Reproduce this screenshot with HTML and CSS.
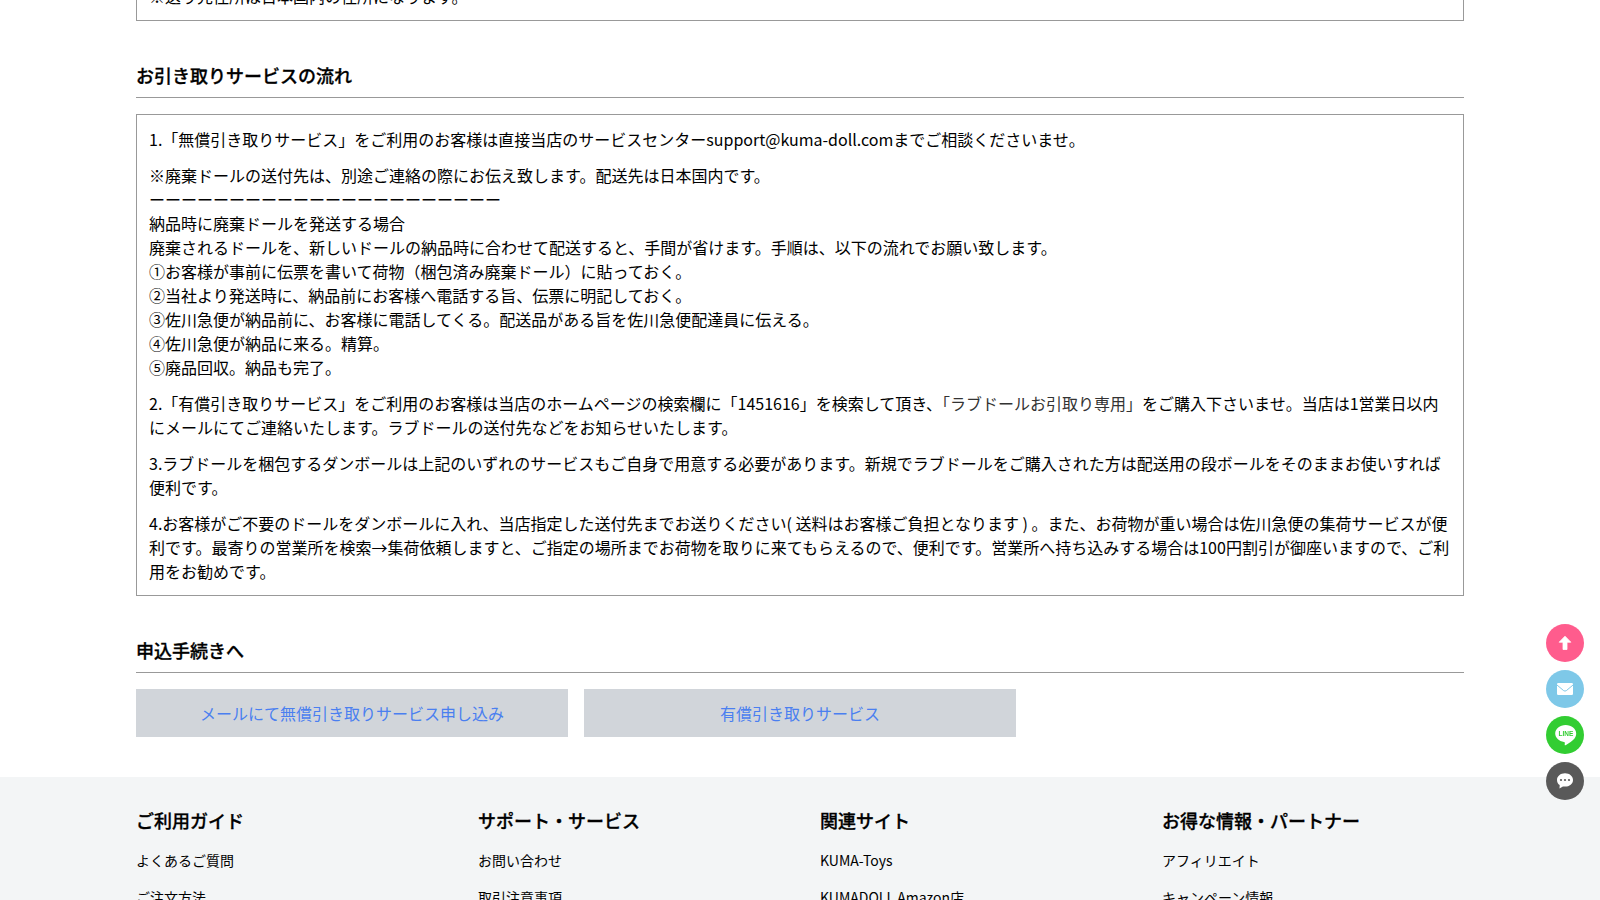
FILE: index.html
```
<!DOCTYPE html>
<html lang="ja">

<head>
    <meta charset="UTF-8">
    <meta name="viewport" content="width=device-width, initial-scale=1.0">
    <title>お引き取りサービス</title>
    <link rel="stylesheet" href="styles.css">
</head>

<body>
    <main class="container">
        <div class="box box-top">
            <p>※送り先住所は日本国内の住所になります。</p>
        </div>

        <h2 class="title">お引き取りサービスの流れ</h2>
        <div class="box">
            <p>1.「無償引き取りサービス」をご利用のお客様は直接当店のサービスセンターsupport@kuma-doll.comまでご相談くださいませ。</p>
            <p>※廃棄ドールの送付先は、別途ご連絡の際にお伝え致します。配送先は日本国内です。<br>
                ーーーーーーーーーーーーーーーーーーーーーー<br>
                納品時に廃棄ドールを発送する場合<br>
                廃棄されるドールを、新しいドールの納品時に合わせて配送すると、手間が省けます。手順は、以下の流れでお願い致します。<br>
                ①お客様が事前に伝票を書いて荷物（梱包済み廃棄ドール）に貼っておく。<br>
                ②当社より発送時に、納品前にお客様へ電話する旨、伝票に明記しておく。<br>
                ③佐川急便が納品前に、お客様に電話してくる。配送品がある旨を佐川急便配達員に伝える。<br>
                ④佐川急便が納品に来る。精算。<br>
                ⑤廃品回収。納品も完了。</p>
            <p>2.「有償引き取りサービス」をご利用のお客様は当店のホームページの検索欄に「1451616」を検索して頂き、<a href="#">「ラブドールお引取り専用」</a>をご購入下さいませ。当店は1営業日以内にメールにてご連絡いたします。ラブドールの送付先などをお知らせいたします。</p>
            <p>3.ラブドールを梱包するダンボールは上記のいずれのサービスもご自身で用意する必要があります。新規でラブドールをご購入された方は配送用の段ボールをそのままお使いすれば便利です。</p>
            <p>4.お客様がご不要のドールをダンボールに入れ、当店指定した送付先までお送りください( 送料はお客様ご負担となります ) 。また、お荷物が重い場合は佐川急便の集荷サービスが便利です。最寄りの営業所を検索→集荷依頼しますと、ご指定の場所までお荷物を取りに来てもらえるので、便利です。営業所へ持ち込みする場合は100円割引が御座いますので、ご利用をお勧めです。</p>
        </div>

        <h2 class="title">申込手続きへ</h2>
        <div class="apply">
            <a class="apply-btn" href="#">メールにて無償引き取りサービス申し込み</a>
            <a class="apply-btn" href="#">有償引き取りサービス</a>
        </div>
    </main>

    <footer class="footer">
        <div class="footer-inner">
            <div class="footer-col">
                <h3>ご利用ガイド</h3>
                <a href="#">よくあるご質問</a>
                <a href="#">ご注文方法</a>
            </div>
            <div class="footer-col">
                <h3>サポート・サービス</h3>
                <a href="#">お問い合わせ</a>
                <a href="#">取引注意事項</a>
            </div>
            <div class="footer-col">
                <h3>関連サイト</h3>
                <a href="#">KUMA-Toys</a>
                <a href="#">KUMADOLL Amazon店</a>
            </div>
            <div class="footer-col">
                <h3>お得な情報・パートナー</h3>
                <a href="#">アフィリエイト</a>
                <a href="#">キャンペーン情報</a>
            </div>
        </div>
    </footer>

    <!-- Floating buttons -->
    <div class="side">
        <a class="side-btn top" href="#">
            <svg viewBox="0 0 38 38"><path d="M19 12.2L24.8 18.2H21V25.500H17V18.2H13.200Z" fill="#fff" stroke="#fff" stroke-width=".8" stroke-linejoin="round"/></svg>
        </a>
        <a class="side-btn mail" href="#">
            <svg viewBox="0 0 38 38"><rect x="11" y="13" width="16" height="12" rx="1.2" fill="#fff"/><path d="M11 15L17.600 20.600Q19 21.600 20.400 20.600L27 15" fill="none" stroke="#7ec8e8" stroke-width="1"/></svg>
        </a>
        <a class="side-btn line" href="#">
            <svg viewBox="0 0 38 38"><path d="M19.600 9C13.900 9 9.200 12.800 9.200 17.600C9.200 21.900 13 25.300 18 26C19.200 26.300 18.800 27.300 18.700 28.800C18.700 29.500 19.200 29.500 20 29C23 27.200 26.500 25 28.500 22.500C29.700 21 30.200 19.400 30.200 17.600C30.200 12.800 25.500 9 19.600 9Z" fill="#fff"/><text x="12.500" y="20" textLength="14.800" lengthAdjust="spacingAndGlyphs" class="line-text">LINE</text></svg>
        </a>
        <a class="side-btn chat" href="#">
            <svg viewBox="0 0 38 38"><path d="M19 11.200C14.500 11.200 11 14.100 11 17.900C11 20 12 21.800 13.700 23.100L13.500 26.400L16.900 24.400C17.600 24.600 18.300 24.600 19 24.600C23.500 24.600 27 21.700 27 17.900C27 14.100 23.500 11.200 19 11.200Z" fill="#fff"/><g fill="#595959"><circle cx="15" cy="18" r="1.100"/><circle cx="19" cy="18" r="1.100"/><circle cx="23" cy="18" r="1.100"/></g></svg>
        </a>
    </div>
</body>

</html>
```

FILE: styles.css
```
* {
    box-sizing: border-box;
}

body {
    margin: 0;
    height: 900px;
    overflow: hidden;
    font-family: "Noto Sans CJK JP", sans-serif;
    font-size: 16px;
    line-height: 24px;
    color: #000;
    background: #fff;
}

a {
    color: #333;
    text-decoration: none;
}

.container {
    width: 1328px;
    margin: 0 auto;
}

.box {
    padding: 12px;
    border: 1px solid #999;
}

.box p {
    margin: 0 0 12px;
}

.box p:last-child {
    margin-bottom: 0;
}

/* scrolled part of the previous section */
.box-top {
    margin-top: -29px;
}

.title {
    height: 37px;
    margin: 40px 0 16px;
    font-size: 18px;
    font-weight: 500;
    line-height: 28px;
    -webkit-text-stroke: 0.3px #000;
    border-bottom: 1px solid #999;
}

.apply {
    display: flex;
    gap: 16px;
    margin-bottom: 40px;
}

.apply-btn {
    width: 432px;
    line-height: 48px;
    text-align: center;
    color: #4a7ff0;
    background: #d1d5da;
}

.footer {
    height: 123px;
    padding-top: 29px;
    overflow: hidden;
    background: #f3f5f6;
}

.footer-inner {
    display: grid;
    grid-template-columns: repeat(4, 342px);
    width: 1328px;
    margin: 0 auto;
}

.footer-col h3 {
    margin: 0 0 14px;
    font-size: 18px;
    font-weight: 500;
    line-height: 28px;
    -webkit-text-stroke: 0.3px #000;
}

.footer-col a {
    display: block;
    margin-bottom: 13px;
    font-size: 14px;
    color: #000;
}

.side {
    position: fixed;
    right: 16px;
    bottom: 100px;
    display: flex;
    flex-direction: column;
    gap: 8px;
}

.side-btn {
    width: 38px;
    height: 38px;
    border-radius: 50%;
}

.side-btn svg {
    display: block;
}

.top {
    background: #ff5c8d;
}

.mail {
    background: #7ec8e8;
}

.line {
    background: #32cd32;
}

.chat {
    background: #595959;
}

.line-text {
    font: bold 6.5px "Liberation Sans", sans-serif;
    fill: #32cd32;
}
```
